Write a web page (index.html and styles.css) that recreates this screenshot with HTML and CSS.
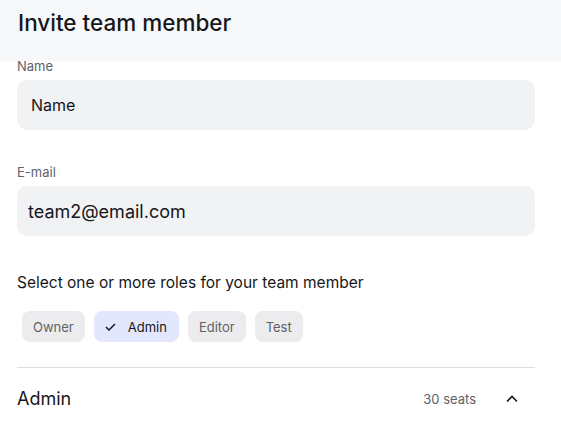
FILE: index.html
```html
<!DOCTYPE html>
<html lang="en">
<head>
    <meta charset="UTF-8">
    <meta name="viewport" content="width=device-width, initial-scale=1.0">
    <title>Invite team member</title>
    <link rel="stylesheet" href="styles.css">
</head>
<body>

    <header class="modal-header">
        <h1 class="modal-title">Invite team member</h1>
    </header>

    <main class="invite-form">
        <div class="field field-first">
            <label class="field-label" for="member-name">Name</label>
            <div class="field-input field-input-placeholder" id="member-name">Name</div>
        </div>

        <div class="field">
            <label class="field-label" for="member-email">E-mail</label>
            <div class="field-input field-input-value" id="member-email">team2@email.com</div>
        </div>

        <p class="roles-hint">Select one or more roles for your team member</p>

        <div class="role-chips">
            <button class="chip">Owner</button>
            <button class="chip chip-selected">
                <svg class="chip-check" width="11" height="8" viewBox="0 0 11 8">
                    <polyline points="1,4 4,7 10,1" fill="none" stroke="currentColor" stroke-width="1.5"/>
                </svg>
                Admin
            </button>
            <button class="chip">Editor</button>
            <button class="chip">Test</button>
        </div>

        <div class="role-row">
            <span class="role-name">Admin</span>
            <span class="role-seats">30 seats</span>
            <svg class="role-toggle" width="12" height="8" viewBox="0 0 12 8">
                <polyline points="1,6.5 6,1.5 11,6.5" fill="none" stroke="currentColor" stroke-width="1.6"/>
            </svg>
        </div>
    </main>

</body>
</html>
```

FILE: styles.css
```css
/* Invite dialog */
:root {
    --header-bg: #f7f8fa;
    --input-bg: #f1f2f4;
    --chip-bg: #ececee;
    --chip-selected-bg: #e3e7fd;
    --text-main: #16171a;
    --text-muted: #5f6168;
    --divider: #dcdde0;
}

html, body {
    margin: 0;
    padding: 0;
    background: #fff;
    font-family: Inter, "Noto Sans", sans-serif;
    color: var(--text-main);
}

.modal-header {
    height: 61px;
    background: var(--header-bg);
    padding: 0 18px;
    box-sizing: border-box;
}

.modal-title {
    margin: 0;
    padding-top: 9px;
    font-size: 22.5px;
    line-height: 28px;
    font-weight: 500;
}

.invite-form {
    padding: 0 26px 0 17px;
}

/* Text fields */
.field {
    margin-top: 36px;
}

.field-first {
    margin-top: -1px;
}

.field-label {
    display: block;
    font-size: 13px;
    line-height: 13px;
    color: var(--text-muted);
    margin-bottom: 7px;
}

.field-input {
    display: flex;
    align-items: center;
    height: 50px;
    background: var(--input-bg);
    border-radius: 10px;
    box-sizing: border-box;
}

.field-input-placeholder {
    padding-left: 14px;
    font-size: 16px;
}

.field-input-value {
    padding-left: 11px;
    font-size: 18px;
}

/* Roles */
.roles-hint {
    margin: 37px 0 0;
    font-size: 15.5px;
    line-height: 20px;
}

.role-chips {
    display: flex;
    gap: 9px;
    margin: 18px 0 0 5px;
}

.chip {
    display: flex;
    align-items: center;
    height: 31px;
    padding: 0 11px;
    border: none;
    border-radius: 8px;
    background: var(--chip-bg);
    color: var(--text-muted);
    font-family: inherit;
    font-size: 13px;
}

.chip-selected {
    background: var(--chip-selected-bg);
    color: var(--text-main);
    padding-right: 12px;
}

.chip-check {
    margin-right: 12px;
}

.role-row {
    display: flex;
    align-items: center;
    margin-top: 25px;
    border-top: 1px solid var(--divider);
    padding-top: 19px;
}

.role-name {
    flex: 1;
    font-size: 18px;
    line-height: 24px;
}

.role-seats {
    font-size: 13px;
    color: var(--text-muted);
}

.role-toggle {
    margin: 0 17px 0 30px;
    color: var(--text-main);
}
```
